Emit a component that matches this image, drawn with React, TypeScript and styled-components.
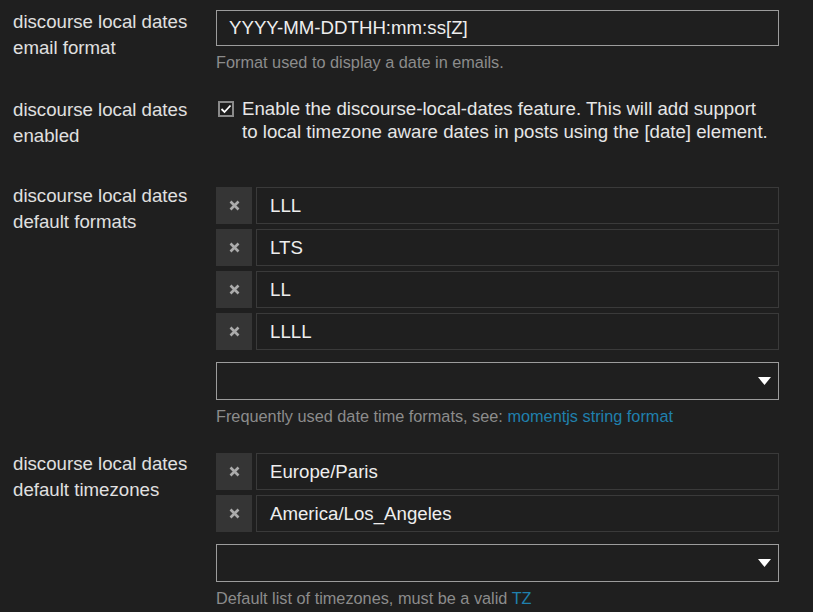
import styled, { createGlobalStyle } from "styled-components";

const GlobalStyle = createGlobalStyle`
  html, body {
    margin: 0;
    background: #1f1f1f;
  }
  body {
    font-family: "Liberation Sans", Arial, sans-serif;
    color: #e2e2e2;
  }
`;

const StyledPage = styled.div`
  padding: 9px 13px 0 13px;
  display: flex;
  flex-direction: column;
  gap: 25px;
`;

const StyledRow = styled.div<{ $extra?: number }>`
  display: grid;
  grid-template-columns: 203px 563px;
  align-items: start;
  padding-bottom: ${(p) => p.$extra ?? 0}px;
`;

const StyledLabel = styled.div`
  font-size: 18.67px;
  line-height: 26px;
  color: #e0e0e0;
`;

const StyledValue = styled.div<{ $top?: number }>`
  display: flex;
  flex-direction: column;
  margin-top: ${(p) => p.$top ?? 0}px;
`;

const StyledInput = styled.div`
  height: 36px;
  box-sizing: border-box;
  border: 1px solid #9c9c9c;
  display: flex;
  align-items: center;
  padding: 0 12px;
  font-size: 18.67px;
  color: #eeeeee;
`;

const StyledDesc = styled.div`
  font-size: 16.3px;
  line-height: 20px;
  color: #8c8c8c;
  margin-top: 6px;
`;

const StyledLink = styled.span`
  color: #1f80ad;
`;

const StyledCheckRow = styled.div`
  display: flex;
  align-items: flex-start;
  gap: 8px;
  padding-left: 2px;
  padding-right: 8px;
  font-size: 18.67px;
  line-height: 23px;
  color: #e6e6e6;
`;

const StyledCheckbox = styled.span`
  flex: none;
  width: 16px;
  height: 16px;
  box-sizing: border-box;
  border: 2px solid #8a8a8a;
  background: #1f1f1f;
  margin-top: 4px;
  display: flex;
  align-items: center;
  justify-content: center;
`;

const StyledList = styled.div`
  display: flex;
  flex-direction: column;
  gap: 5px;
`;

const StyledItem = styled.div`
  display: flex;
  gap: 4px;
  height: 37px;
`;

const StyledRemove = styled.div`
  width: 36px;
  flex: none;
  background: #353535;
  display: flex;
  align-items: center;
  justify-content: center;
`;

const StyledItemInput = styled.div`
  flex: 1;
  box-sizing: border-box;
  border: 1px solid #3a3a3a;
  display: flex;
  align-items: center;
  padding: 0 13px;
  font-size: 18.67px;
  color: #eeeeee;
`;

const StyledSelect = styled.div`
  height: 38px;
  box-sizing: border-box;
  border: 1px solid #9c9c9c;
  margin-top: 12px;
  display: flex;
  align-items: center;
  justify-content: flex-end;
  padding-right: 7px;
`;

const Cross = () => (
  <svg width="11" height="11" viewBox="0 0 11 11">
    <path d="M1.5 1.5 L9.5 9.5 M9.5 1.5 L1.5 9.5" stroke="#ababab" strokeWidth="2.6" />
  </svg>
);

const Check = () => (
  <svg width="12" height="12" viewBox="0 0 12 12">
    <path d="M1.5 6 L4.5 9 L10.5 2.5" stroke="#ffffff" strokeWidth="1.8" fill="none" />
  </svg>
);

const Caret = () => (
  <svg width="13" height="8" viewBox="0 0 13 8">
    <path d="M0 0 H13 L6.5 8 Z" fill="#ffffff" />
  </svg>
);

interface IListProps {
  items: string[];
}

const ListSetting = ({ items }: IListProps) => (
  <>
    <StyledList>
      {items.map((item) => (
        <StyledItem key={item}>
          <StyledRemove>
            <Cross />
          </StyledRemove>
          <StyledItemInput>{item}</StyledItemInput>
        </StyledItem>
      ))}
    </StyledList>
    <StyledSelect>
      <Caret />
    </StyledSelect>
  </>
);

const App = () => {
  return (
    <>
      <GlobalStyle />
      <StyledPage>
        <StyledRow>
          <StyledLabel>
            discourse local dates
            <br />
            email format
          </StyledLabel>
          <StyledValue $top={1}>
            <StyledInput>YYYY-MM-DDTHH:mm:ss[Z]</StyledInput>
            <StyledDesc>Format used to display a date in emails.</StyledDesc>
          </StyledValue>
        </StyledRow>

        <StyledRow $extra={9}>
          <StyledLabel>
            discourse local dates
            <br />
            enabled
          </StyledLabel>
          <StyledValue>
            <StyledCheckRow>
              <StyledCheckbox>
                <Check />
              </StyledCheckbox>
              <span>
                Enable the discourse-local-dates feature. This will add support
                to local timezone aware dates in posts using the [date] element.
              </span>
            </StyledCheckRow>
          </StyledValue>
        </StyledRow>

        <StyledRow>
          <StyledLabel>
            discourse local dates
            <br />
            default formats
          </StyledLabel>
          <StyledValue $top={4}>
            <ListSetting items={["LLL", "LTS", "LL", "LLLL"]} />
            <StyledDesc>
              Frequently used date time formats, see:{" "}
              <StyledLink>momentjs string format</StyledLink>
            </StyledDesc>
          </StyledValue>
        </StyledRow>

        <StyledRow>
          <StyledLabel>
            discourse local dates
            <br />
            default timezones
          </StyledLabel>
          <StyledValue $top={2}>
            <ListSetting items={["Europe/Paris", "America/Los_Angeles"]} />
            <StyledDesc>
              Default list of timezones, must be a valid{" "}
              <StyledLink>TZ</StyledLink>
            </StyledDesc>
          </StyledValue>
        </StyledRow>
      </StyledPage>
    </>
  );
};

export default App;
